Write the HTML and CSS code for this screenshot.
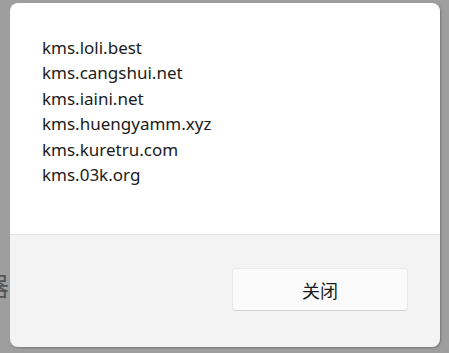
FILE: index.html
```html
<!DOCTYPE html>
<html lang="zh">
<head>
<meta charset="utf-8">
<link rel="stylesheet" href="styles.css">
</head>
<body>
<span class="bg-char">器</span>
<div class="dialog">
  <div class="content">
    <div class="line">kms.loli.best</div>
    <div class="line">kms.cangshui.net</div>
    <div class="line">kms.iaini.net</div>
    <div class="line">kms.huengyamm.xyz</div>
    <div class="line">kms.kuretru.com</div>
    <div class="line">kms.03k.org</div>
  </div>
  <div class="footer">
    <button class="btn">关闭</button>
  </div>
</div>
</body>
</html>
```
FILE: styles.css
```css
html, body {
  margin: 0;
  padding: 0;
}
body {
  width: 449px;
  height: 353px;
  background: #9e9e9e;
  overflow: hidden;
  position: relative;
  font-family: "Noto Sans", "Noto Sans CJK SC", sans-serif;
}
.bg-char {
  position: absolute;
  left: -17px;
  top: 270px;
  font-size: 26px;
  line-height: 30px;
  color: #555555;
  font-family: "Noto Sans CJK SC", sans-serif;
}
.dialog {
  position: relative;
  margin: 3px 0 0 10px;
  width: 430px;
  height: 344px;
  border-radius: 8px;
  overflow: hidden;
  display: flex;
  flex-direction: column;
  box-shadow: 1px 1px 2px rgba(0,0,0,0.25);
}
.content {
  background: #ffffff;
  height: 232px;
  box-sizing: border-box;
  padding: 32px 0 0 32px;
  border-bottom: 1px solid #e6e6e6;
}
.line {
  font-size: 17px;
  line-height: 25.4px;
  color: #1b1b1b;
}
.footer {
  flex: 1;
  background: #f3f3f3;
  padding: 33px 0 0 222px;
}
.btn {
  width: 176px;
  height: 43px;
  background: #fbfbfb;
  border: 1px solid #e8e8e8;
  border-bottom-color: #d0d0d0;
  border-radius: 4px;
  font-family: "Noto Sans CJK SC", sans-serif;
  font-size: 18px;
  color: #1b1b1b;
  padding: 0;
}
```
